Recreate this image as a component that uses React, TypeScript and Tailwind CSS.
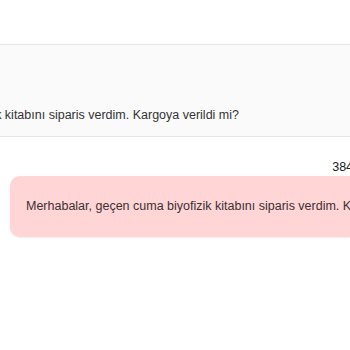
export default function App() {
  const full = "Merhabalar, geçen cuma biyofizik kitabını siparis verdim. Kargoya verildi mi?";
  return (
    <div className="h-[350px] w-[350px] overflow-hidden bg-white font-['Liberation_Sans',Arial,sans-serif]">
      <div className="h-[44px]" />
      <div className="h-[93px] border-y border-[#e6e6e6] bg-[#fafafa]">
        <div className="flex h-full w-[239px] items-end justify-end overflow-hidden pb-[12px]">
          <p className="whitespace-nowrap text-[12.5px] leading-[18px] text-[#333]">{full}</p>
        </div>
      </div>
      <div className="flex justify-end pt-[22px]">
        <span className="-mr-[10px] text-[12.5px] leading-[16px] text-[#222]">3840</span>
      </div>
      <div className="ml-[10px] mt-[1px] flex h-[61px] items-center overflow-hidden rounded-l-[10px] bg-[#ffd5d6] pl-[16px] shadow-[0_1px_2px_rgba(0,0,0,0.08)]">
        <p className="whitespace-nowrap text-[12.5px] text-[#3a3133]">{full}</p>
      </div>
    </div>
  );
}
